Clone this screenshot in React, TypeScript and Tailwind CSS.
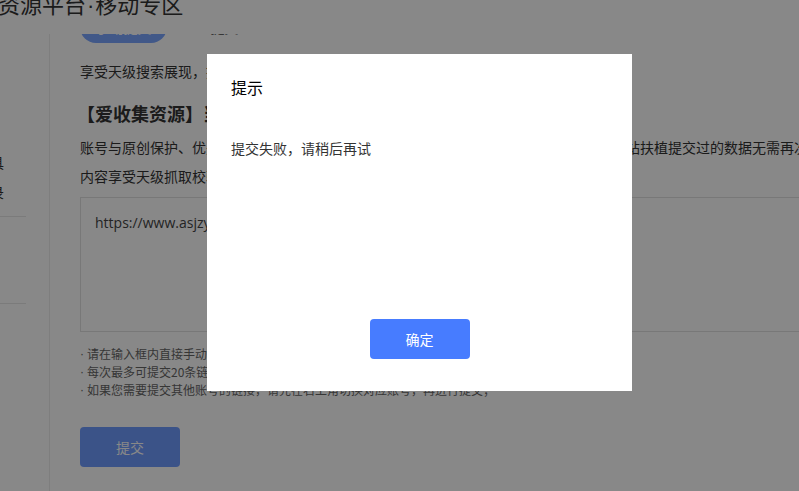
import React from "react";

const bullets = [
  "请在输入框内直接手动粘贴需要提交的链接，每行一条；",
  "每次最多可提交20条链接，超出部分将不会被提交；",
  "如果您需要提交其他账号的链接，请先在右上角切换对应账号，再进行提交；",
];

function Sidebar() {
  return (
    <aside className="w-[50px] shrink-0 border-r border-[#ececec] pt-[113px] text-[14px] leading-[30px] text-[#333]">
      <div className="-ml-[52px] whitespace-nowrap">提交工具</div>
      <div className="-ml-[52px] whitespace-nowrap">提交记录</div>
      <div className="mt-[9px] h-px w-[26px] bg-[#e6e6e6]" />
      <div className="mt-[86px] h-px w-[26px] bg-[#e6e6e6]" />
    </aside>
  );
}

function Content() {
  return (
    <main className="w-[1000px] shrink-0 pl-[30px] text-[#333]">
      <div className="-mt-[23px] flex h-[32px] items-center gap-[22px] text-[14px]">
        <div className="flex h-[32px] w-[87px] items-center justify-center rounded-full bg-[#7aa5ff] text-white">
          手动提交
        </div>
        <div className="text-[#666]">API提交</div>
      </div>

      <p className="mt-[18px] text-[14px] leading-[20px]">享受天级搜索展现，提交后内容将更快被收录</p>

      <h2 className="mt-[20px] -ml-[3px] text-[18px] font-bold leading-[24px]">【爱收集资源】当前账号提交权益</h2>

      <div className="mt-[8px] whitespace-nowrap text-[14px] leading-[29px]">
        <div>账号与原创保护、优先收录、快速展现，加快网站内容曝光与流量增长。通过资源平台新站扶植提交过的数据无需再次提交。</div>
        <div>内容享受天级抓取校验服务</div>
      </div>

      <div className="mt-[6px] h-[135px] border border-[#e2e2e2] pl-[14px] pt-[15px] font-['Open_Sans','Noto_Sans_CJK_SC',sans-serif] text-[14px] leading-[20px] text-[#444]">
        https://www.asjzy.com/mobile/
      </div>

      <ul className="mt-[13px] text-[12px] leading-[18px] text-[#666]">
        {bullets.map((b) => (
          <li key={b} className="flex h-[18px] items-center whitespace-nowrap">
            <span className="w-[7px] font-['Liberation_Sans',sans-serif]">·</span>
            {b}
          </li>
        ))}
      </ul>

      <button className="mt-[28px] flex h-[40px] w-[100px] items-center justify-center rounded-[4px] bg-[#6f9cff] text-[14px] text-white">
        提交
      </button>
    </main>
  );
}

function Dialog() {
  return (
    <div className="absolute left-[207px] top-[54px] flex h-[337px] w-[425px] flex-col bg-white px-[24px] pb-[32px] pt-[24px]">
      <div className="text-[16px] leading-[18px] text-black">提示</div>
      <div className="mt-[42px] text-[14px] leading-[20px] text-[#333]">提交失败，请稍后再试</div>
      <div className="flex-1" />
      <div className="flex justify-center">
        <button className="flex h-[40px] w-[100px] items-center justify-center rounded-[4px] bg-[#477cff] text-[14px] text-white">
          确定
        </button>
      </div>
    </div>
  );
}

export default function App() {
  return (
    <div className="relative h-[491px] w-[799px] overflow-hidden bg-white font-['Noto_Sans_CJK_SC','Noto_Sans',sans-serif] [text-spacing-trim:space-all]">
      <header className="relative z-10 h-[34px] overflow-hidden bg-white">
        <div className="-ml-[2px] -mt-[8px] whitespace-nowrap text-[22px] leading-[22px] text-[#333]">
          资源平台<span className="px-[1px] font-['Liberation_Sans',sans-serif]">·</span>移动专区
        </div>
      </header>
      <div className="flex h-[457px]">
        <Sidebar />
        <Content />
      </div>
      <div className="absolute inset-0 z-20 bg-black/[0.467]">
        <Dialog />
      </div>
    </div>
  );
}
